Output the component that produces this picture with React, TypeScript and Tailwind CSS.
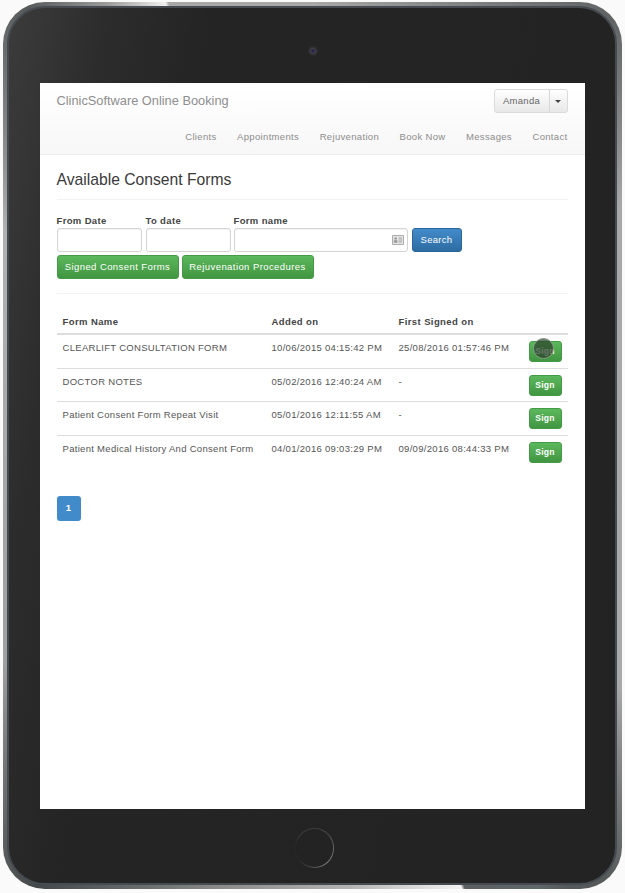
const navLinks = ["Clients", "Appointments", "Rejuvenation", "Book Now", "Messages", "Contact"];

const rows = [
  { name: "CLEARLIFT CONSULTATION FORM", added: "10/06/2015 04:15:42 PM", signed: "25/08/2016 01:57:46 PM", touch: true },
  { name: "DOCTOR NOTES", added: "05/02/2016 12:40:24 AM", signed: "-" },
  { name: "Patient Consent Form Repeat Visit", added: "05/01/2016 12:11:55 AM", signed: "-" },
  { name: "Patient Medical History And Consent Form", added: "04/01/2016 09:03:29 PM", signed: "09/09/2016 08:44:33 PM" },
];

const greenBtn = "rounded-[3px] border border-[#459a45] bg-gradient-to-b from-[#5cb85c] to-[#419641] text-white";

function CardIcon() {
  return (
    <svg width="12" height="10" viewBox="0 0 12 10" aria-hidden="true">
      <rect x="0" y="0" width="12" height="10" rx="1" fill="#adadad" />
      <rect x="1" y="1" width="10" height="8" fill="#e6e6e6" />
      <circle cx="3.6" cy="3.5" r="1.3" fill="#9a9a9a" />
      <rect x="1.8" y="5.2" width="3.6" height="2.6" fill="#9a9a9a" />
      <path d="M6.6 3h3.4M6.6 5h3.4M6.6 7h3.4" stroke="#a0a0a0" strokeWidth="1" />
    </svg>
  );
}

function Field({ label, width, children }: { label: string; width: string; children?: React.ReactNode }) {
  return (
    <div className={width}>
      <div className="h-[15px] text-[9.5px] leading-[15px] font-bold tracking-[0.35px] text-[#444]">{label}</div>
      <div className="flex h-[24px] items-center justify-end rounded-[3px] border border-[#d4d4d4] bg-white pr-[3px] shadow-[inset_0_1px_1px_rgba(0,0,0,0.05)]">
        {children}
      </div>
    </div>
  );
}

export default function App() {
  return (
    <div className="h-[893px] w-[625px] overflow-hidden bg-[#fafafa] pt-[2px] pl-[3px] font-['Liberation_Sans',Arial,sans-serif]">
      {/* tablet shell */}
      <div className="h-[887px] w-[619px] rounded-[42px] bg-[conic-gradient(from_0deg_at_50%_50%,#a8a8a8_0deg,#5f6364_35deg,#a8a8a8_52deg,#aaaaaa_128deg,#55595a_146deg,#55595a_150deg,#60686a_153deg,#5c5f60_161deg,#f2f2f2_161.4deg,#b4b4b4_175deg,#8a8a8a_192deg,#45494a_212deg,#a0a0a0_235deg,#b0b0b0_305deg,#565a5b_327deg,#9a9a9a_335deg,#f0f0f0_341.6deg,#a8a8a8_342deg,#a8a8a8_360deg)] p-[4px] pr-[5px]">
        <div className="flex h-full flex-col items-center rounded-[38px] border-2 border-[#454b50] bg-[linear-gradient(100deg,#3b3b3b_0%,#363636_5%,#2c2c2c_13%,#242424_27%,#232323_100%)]">
          <div className="mt-[38px] ml-[2px] flex h-[10px] w-[10px] items-center justify-center rounded-full bg-[#2e2e33]">
            <div className="h-[4px] w-[4px] rounded-full bg-[#2b2550] ring-1 ring-[#444]" />
          </div>

          {/* screen */}
          <div className="mt-[27px] h-[726px] w-[545px] bg-white">
            <div className="h-[72px] border-b border-[#efefef] bg-gradient-to-b from-white to-[#f7f7f7] px-[17px]">
              <div className="flex h-[36px] items-start justify-between pt-[6px]">
                <div className="pt-[4px] text-[12.8px] leading-[15px] text-[#8e8e8e]">ClinicSoftware Online Booking</div>
                <div className="flex h-[24px] w-[74px] rounded-[3px] border border-[#dbdbdb] bg-gradient-to-b from-white to-[#e8e8e8] text-[9.5px] text-[#666]">
                  <div className="flex w-[55px] items-center justify-center border-r border-[#d6d6d6] tracking-[0.3px]">Amanda</div>
                  <div className="flex flex-1 items-center justify-center">
                    <div className="h-0 w-0 border-x-[3px] border-t-[3px] border-x-transparent border-t-[#444]" />
                  </div>
                </div>
              </div>
              <div className="flex h-[35px] items-center justify-end gap-[20.5px] pt-[2px]">
                {navLinks.map((link) => (
                  <span key={link} className="whitespace-nowrap text-[9.5px] tracking-[0.33px] text-[#8c8c8c]">
                    {link}
                  </span>
                ))}
              </div>
            </div>

            <div className="px-[17px]">
              <div className="border-b border-[#f3f3f3] pt-[15px] pb-[9px]">
                <h1 className="text-[15.7px] leading-[20px] text-[#3a3a3a]">Available Consent Forms</h1>
              </div>

              <div className="mt-[13px] flex gap-[4px]">
                <Field label="From Date" width="w-[85px]" />
                <Field label="To date" width="w-[85px]" />
                <div className="-ml-px">
                  <Field label="Form name" width="w-[174px]">
                    <CardIcon />
                  </Field>
                </div>
                <div className="mt-[15px] flex h-[24px] w-[50px] items-center justify-center rounded-[3px] border border-[#2b669a] bg-gradient-to-b from-[#428bca] to-[#2d6ca2] text-[9.5px] tracking-[0.3px] text-white">
                  Search
                </div>
              </div>

              <div className="mt-[3px] flex gap-[3px]">
                <div className={`flex h-[24px] w-[122px] items-center justify-center text-[9.5px] tracking-[0.42px] ${greenBtn}`}>Signed Consent Forms</div>
                <div className={`flex h-[24px] w-[132px] items-center justify-center text-[9.5px] tracking-[0.42px] ${greenBtn}`}>Rejuvenation Procedures</div>
              </div>

              <div className="mt-[14px] border-t border-[#f3f3f3]" />

              <div className="mt-[20px]">
                <div className="flex h-[21px] items-start border-b-2 border-[#ddd] pt-px text-[9.5px] font-bold tracking-[0.4px] text-[#444]">
                  <div className="w-[209px] pl-[6px]">Form Name</div>
                  <div className="w-[127px] pl-[6px]">Added on</div>
                  <div className="pl-[6px]">First Signed on</div>
                </div>
                {rows.map((row, i) => (
                  <div
                    key={row.name}
                    className={`flex h-[33.5px] items-start text-[9.5px] tracking-[0.3px] text-[#555] ${i < rows.length - 1 ? "border-b border-[#ddd]" : ""}`}
                  >
                    <div className="w-[209px] whitespace-nowrap pt-[6px] pl-[6px]">{row.name}</div>
                    <div className="w-[127px] whitespace-nowrap pt-[6px] pl-[6px]">{row.added}</div>
                    <div className="w-[136px] whitespace-nowrap pt-[6px] pl-[6px]">{row.signed}</div>
                    <div className={`relative mt-[6px] flex h-[21px] w-[33px] items-center justify-center text-[8.5px] font-bold ${greenBtn}`}>
                      Sign
                      {row.touch && (
                        <div className="absolute top-[-4px] left-[3px] h-[21px] w-[21px] rounded-full border border-[#8a9a8a] bg-[#2a3d2a]/70" />
                      )}
                    </div>
                  </div>
                ))}
              </div>

              <div className="mt-[27px] flex h-[25px] w-[24px] items-center justify-center rounded-[3px] bg-[#428bca] text-[9.5px] font-bold text-white">
                1
              </div>
            </div>
          </div>

          {/* home button */}
          <div className="mt-[19px] ml-[5px] h-[40px] w-[39px] rounded-full bg-[conic-gradient(from_0deg,#3a3a3a_0deg,#4a4a4a_50deg,#6a6a6a_100deg,#7a7a7a_140deg,#4a4a4a_190deg,#262626_235deg,#282828_280deg,#3c3c3c_320deg,#3a3a3a_360deg)] p-px">
            <div className="h-full w-full rounded-full bg-[#232323]" />
          </div>
        </div>
      </div>
    </div>
  );
}
